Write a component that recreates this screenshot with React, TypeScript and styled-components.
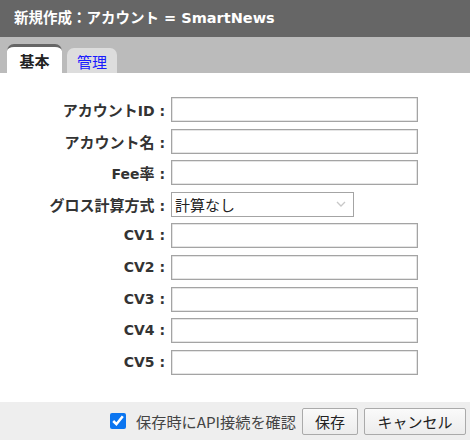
import React from "react";
import styled, { createGlobalStyle } from "styled-components";

const Global = createGlobalStyle`
  html, body { margin: 0; padding: 0; background: #fff; }
  body { font-family: "DejaVu Sans", "Noto Sans CJK JP", sans-serif; width: 470px; height: 440px; overflow: hidden; }
  * { box-sizing: border-box; }
`;

const Dialog = styled.div`
  width: 470px;
  height: 440px;
  display: flex;
  flex-direction: column;
`;

const TitleBar = styled.div`
  height: 37px;
  background: #666;
  color: #fff;
  font-weight: bold;
  font-size: 14.5px;
  line-height: 37px;
  padding-left: 14px;
  font-family: "DejaVu Sans", "Noto Sans CJK JP", sans-serif;
`;

const TabBar = styled.div`
  height: 36px;
  background: #bbb;
  display: flex;
  align-items: flex-end;
  gap: 5px;
  padding-left: 7px;
`;

const Tab = styled.div<{ $active?: boolean }>`
  width: ${(p) => (p.$active ? 55 : 50)}px;
  height: ${(p) => (p.$active ? 29 : 25)}px;
  background: ${(p) => (p.$active ? "#fff" : "#ddd")};
  color: ${(p) => (p.$active ? "#222" : "#1a1aff")};
  font-weight: ${(p) => (p.$active ? "bold" : "normal")};
  border-top: ${(p) => (p.$active ? "3px solid #666" : "none")};
  border-radius: 7px 7px 0 0;
  font-size: 15px;
  font-family: "Noto Sans CJK JP", sans-serif;
  display: flex;
  align-items: center;
  justify-content: center;
  padding-top: ${(p) => (p.$active ? 0 : 1)}px;
`;

const Body = styled.div`
  flex: 1;
  padding-top: 24px;
`;

const FormGrid = styled.div`
  display: grid;
  grid-template-columns: 165px 247px;
  column-gap: 6px;
  row-gap: 6.6px;
`;

const Label = styled.label`
  display: block;
  height: 25px;
  line-height: 25px;
  text-align: right;
  font-weight: bold;
  font-size: 14px;
  color: #333;
  white-space: nowrap;
`;

const Ja = styled.span`
  font-size: 15px;
  font-family: "Noto Sans CJK JP", sans-serif;
`;

const TextInput = styled.input`
  height: 25px;
  width: 247px;
  border: 1px solid #a4a4a4;
  box-shadow: inset 0 0 0 0.5px #ccc;
  padding: 0 4px;
  font-size: 14px;
  outline: none;
`;

const SelectWrap = styled.div`
  position: relative;
  width: 183px;
  height: 25px;
`;

const Select = styled.select`
  appearance: none;
  width: 183px;
  height: 25px;
  border: 1px solid #a4a4a4;
  background: #fff;
  padding: 0 3px;
  font-size: 15px;
  color: #222;
  font-family: "Noto Sans CJK JP", sans-serif;
  outline: none;
`;

const Chevron = styled.svg`
  position: absolute;
  right: 8px;
  top: 9px;
  pointer-events: none;
`;

const Footer = styled.div`
  height: 38px;
  background: #eee;
  display: flex;
  align-items: center;
  justify-content: flex-end;
  padding-right: 4px;
  font-family: "Noto Sans CJK JP", sans-serif;
`;

const CheckLabel = styled.label`
  display: flex;
  align-items: center;
  gap: 10px;
  font-size: 15.2px;
  color: #444;
`;

const Check = styled.input`
  width: 16px;
  height: 16px;
  margin: 0;
  accent-color: #0b75f0;
`;

const Button = styled.button<{ $w: number }>`
  width: ${(p) => p.$w}px;
  height: 27px;
  margin-left: 6px;
  background: linear-gradient(#fafafa, #ececec);
  border: 1px solid #aaa;
  border-radius: 2px;
  font-size: 15px;
  color: #222;
  font-family: "Noto Sans CJK JP", sans-serif;
  padding: 0;
`;

function renderLabel(text: string) {
  const parts = text.match(/[\u3000-\u9fff]+|[^\u3000-\u9fff]+/g) || [];
  return parts.map((p, i) =>
    /[\u3000-\u9fff]/.test(p) ? <Ja key={i}>{p}</Ja> : <React.Fragment key={i}>{p}</React.Fragment>
  );
}

const fields = ["アカウントID", "アカウント名", "Fee率"];
const cvs = ["CV1", "CV2", "CV3", "CV4", "CV5"];

export default function App() {
  return (
    <Dialog>
      <Global />
      <TitleBar>新規作成：アカウント = SmartNews</TitleBar>
      <TabBar>
        <Tab $active>基本</Tab>
        <Tab>管理</Tab>
      </TabBar>
      <Body>
        <FormGrid>
          {fields.map((f) => (
            <React.Fragment key={f}>
              <Label>{renderLabel(f + " :")}</Label>
              <TextInput />
            </React.Fragment>
          ))}
          <Label>{renderLabel("グロス計算方式 :")}</Label>
          <SelectWrap>
            <Select defaultValue="none">
              <option value="none">計算なし</option>
            </Select>
            <Chevron width="10" height="7" viewBox="0 0 10 7">
              <path d="M1 1 L5 5 L9 1" fill="none" stroke="#c8c8c8" strokeWidth="1.3" />
            </Chevron>
          </SelectWrap>
          {cvs.map((f) => (
            <React.Fragment key={f}>
              <Label>{renderLabel(f + " :")}</Label>
              <TextInput />
            </React.Fragment>
          ))}
        </FormGrid>
      </Body>
      <Footer>
        <CheckLabel>
          <Check type="checkbox" defaultChecked />
          保存時にAPI接続を確認
        </CheckLabel>
        <Button $w={56}>保存</Button>
        <Button $w={102}>キャンセル</Button>
      </Footer>
    </Dialog>
  );
}
